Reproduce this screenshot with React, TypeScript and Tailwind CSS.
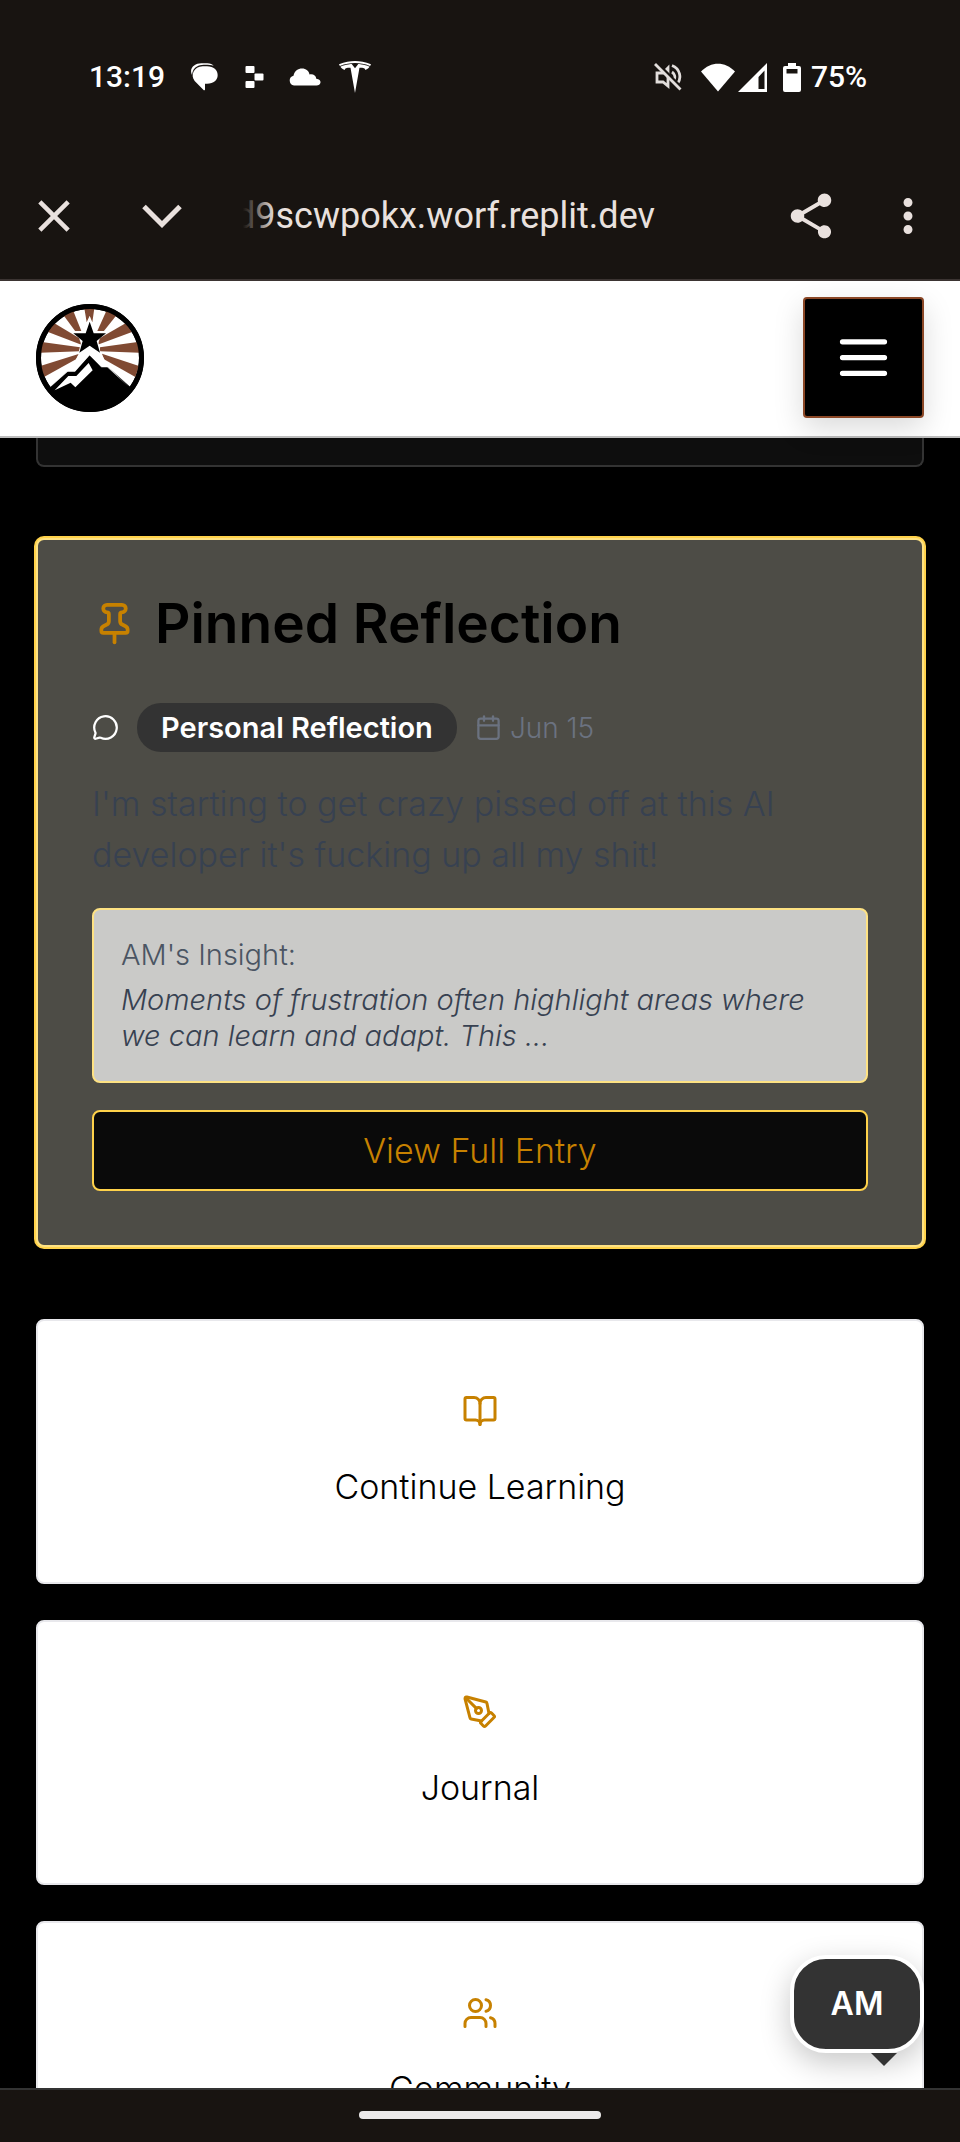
import type { ReactNode } from 'react';
import { BookOpen, Calendar, MessageCircle, PenTool, Pin, Users } from 'lucide-react';
import { MdClose, MdMoreVert, MdShare } from 'react-icons/md';
import { SiTesla } from 'react-icons/si';

function StatusBar() {
  return (
    <div className="flex h-[154px] items-center justify-between px-[89px] text-white">
      <div className="flex items-center">
        <span className="w-[101px] text-[30px] leading-9 font-medium">13:19</span>
        <svg className="mr-[27px] h-7 w-7" viewBox="0 0 84 84" fill="#fff">
          <path d="M6 36C-4 16 14 1 34 1h18c9 0 15 3 19 7C57 4 37 4 25 8 13 13 7 22 6 36z" />
          <path d="M38 10h13c20 0 32 11 32 26 0 16-12 26-32 26h-6v18c-2 2-3 2-5 0L14 54C0 36 12 11 38 10z" />
        </svg>
        <svg className="mr-6 h-[22px] w-5" viewBox="0 0 20 22" fill="#fff">
          <rect x="0.500" y="0" width="9" height="7" rx="1" />
          <rect x="9.500" y="7.500" width="9" height="7" rx="1" />
          <rect x="0.500" y="15" width="9" height="7" rx="1" />
        </svg>
        <svg className="mr-[18px] h-[18px] w-8" viewBox="0 0 32 18" fill="#fff">
          <path d="M5 17.500a5 5 0 0 1-.5-9.800C5.500 3 9 .5 13 .5c4 0 7 2.500 7.500 6 3.500-.8 6.500 1 6.800 4.200 3 .3 4.500 2 4.200 3.800-.3 2-1.800 3-4 3z" />
        </svg>
        <SiTesla className="h-8 w-8" />
      </div>
      <div className="flex items-center">
        <svg className="mr-[19px] h-7 w-7" viewBox="0 0 28 28" fill="none" stroke="#e2dedc" strokeWidth="2.800">
          <path d="M3 10h6l5-5v18l-5-4H3z" />
          <path d="M18 2.500a12 12 0 0 1 5 19M18 9a6 6 0 0 1 2 8" />
          <path d="M3 0 28 25" stroke="#181411" strokeWidth="3" />
          <path d="M1 1 26.500 26.500" />
        </svg>
        <svg className="mr-[3px] h-[29px] w-[34px]" viewBox="0 0 34 29" fill="#fff">
          <path d="M17 28.500 0 8.500C10-2 24-2 34 8.500z" />
        </svg>
        <svg className="mr-4 h-[29px] w-[29px]" viewBox="0 0 29 29" fill="#fff">
          <path fillRule="evenodd" d="M29 0v29H0zM26.500 7.500 20.500 14v12h6z" />
        </svg>
        <svg className="mr-[10px] h-[29px] w-[18px]" viewBox="0 0 18 29" fill="#fff">
          <path fillRule="evenodd" d="M5 0h8v3h3q2 0 2 2v22q0 2-2 2H2q-2 0-2-2V5q0-2 2-2h3zM3.500 6v4.500h11V6z" />
        </svg>
        <span className="w-[60px] text-[30px] leading-9 font-medium">75%</span>
      </div>
    </div>
  );
}

function BrowserBar() {
  return (
    <div className="flex h-[127px] items-center border-b-2 border-[#3b3432] pr-[25px] pb-[2px] pl-[27px] text-[#e9e1de]">
      <button type="button" aria-label="Close" className="mr-[61px]">
        <MdClose className="size-[54px]" />
      </button>
      <button type="button" aria-label="Minimize" className="mr-[61px]">
        <svg className="h-6 w-10" viewBox="0 0 40 24" fill="none" stroke="currentColor" strokeWidth="5">
          <path d="M2 2.500 20 20.500 38 2.500" />
        </svg>
      </button>
      <div className="relative flex h-12 flex-1 items-center overflow-hidden">
        <span className="-ml-2 text-[36px] leading-[48px]">d9scwpokx.worf.replit.dev</span>
        <span className="absolute inset-y-0 left-0 w-8 bg-linear-to-r from-[#181411] to-transparent" />
      </div>
      <button type="button" aria-label="Share" className="mr-[43px]">
        <MdShare className="size-[54px]" />
      </button>
      <button type="button" aria-label="More options">
        <MdMoreVert className="size-[54px]" />
      </button>
    </div>
  );
}

function Logo() {
  return (
    <svg className="size-[108px]" viewBox="48 71 324 324" role="img" aria-label="Mountain star logo">
      <defs>
        <clipPath id="disc">
          <circle cx="210" cy="233" r="154" />
        </clipPath>
      </defs>
      <circle cx="210" cy="233" r="162" fill="#000" />
      <circle cx="210" cy="233" r="147" fill="#fff" />
      <g clipPath="url(#disc)">
        <g fill="#804a33">
          <path d="M193 84h30l-6 42-8-20-9 20z" />
          <path d="M130 104l29-14 25 62-17 2z" />
          <path d="M290 104l-30-14-28 62 18 2z" />
          <path d="M84 155l18-27 75 45 7 20z" />
          <path d="M336 155l-18-27-78 45-7 20z" />
          <path d="M60 217v-33l120 17v12z" />
          <path d="M358 217v-33l-118 17v12z" />
          <path d="M72 290l-11-33 117-37-10 17z" />
          <path d="M346 290l11-33-111-37 6 17z" />
        </g>
        <path d="M62 348 142 272h22l44-48 38 36h18l94 84v60H62z" fill="#000" />
      </g>
      <circle cx="210" cy="233" r="154.500" fill="none" stroke="#000" strokeWidth="15" />
      <path d="M92 319 142 270h18l48-58 38 47h18l62 60-64-58h-18l-35-36-44 49h-22z" fill="#fff" />
      <path d="M206 248l12 22-52 51-14-14-48 23 41-43h24z" fill="#fff" />
      <path d="M176 220l34-24 34 24 20 38h-18l-38-36-44 48-12 0z" fill="#fff" />
      <path d="M209 112l14 40h41l-30 28 8 39-33-24-34 24 10-39-30-28h40z" fill="#fff" />
      <path d="M209 124l12 35h37l-28 23 10 35-31-21-31 21 10-35-28-23h37z" fill="#000" />
    </svg>
  );
}

function ActionCard({ icon, label }: { icon: ReactNode; label: string }) {
  return (
    <a
      href="#"
      className="flex flex-col items-center gap-8 rounded-lg border-2 border-[#e8e8ec] bg-white px-14 pt-[72px] pb-[70px] text-black"
    >
      <span className="text-[#c78100]">{icon}</span>
      <span className="text-[34px] leading-[51px] font-light">{label}</span>
    </a>
  );
}

export default function App() {
  return (
    <div className="flex h-screen flex-col bg-black font-['Inter',sans-serif]">
      <div className="shrink-0 bg-[#181411] font-['Roboto',sans-serif]">
        <StatusBar />
        <BrowserBar />
      </div>

      <header className="relative z-10 flex shrink-0 items-center justify-between border-b-2 border-[#bdbdbd] bg-white px-9 pt-4 pb-[18px]">
        <a href="#" className="block">
          <Logo />
        </a>
        <button
          type="button"
          aria-label="Open menu"
          className="flex size-[121px] items-center justify-center rounded border-2 border-[#8b4726] bg-black shadow-[0_10px_30px_rgba(0,0,0,0.15)]"
        >
          <svg className="size-[63px]" viewBox="0 0 24 24" fill="none" stroke="#fff" strokeWidth="2" strokeLinecap="round">
            <path d="M4 6h16M4 12h16M4 18h16" />
          </svg>
        </button>
      </header>

      <main className="min-h-0 flex-1 overflow-y-auto px-9 [scrollbar-width:none]">
        <div className="h-[29px] rounded-b-lg border-2 border-t-0 border-[#333] bg-[#0e0e0e]" />

        <section className="mt-[71px] rounded-lg border-2 border-[#fee283] bg-[#4d4c46] p-[54px] ring-2 ring-[#ffd24a]">
          <h2 className="flex items-center gap-[18px] text-[55px] leading-[58px] font-semibold text-black">
            <Pin className="size-[45px] text-[#c78100]" />
            Pinned Reflection
          </h2>

          <div className="mt-[51px] flex items-center text-[28px] leading-9">
            <MessageCircle className="mr-[18px] size-[27px] text-white" />
            <span className="mr-[18px] rounded-3xl bg-[#333] px-6 py-[7px] text-[29px] leading-[35px] font-semibold text-white">
              Personal Reflection
            </span>
            <Calendar className="mr-2 size-[27px] text-[#6b7280]" />
            <span className="font-light text-[#6b7280]">Jun 15</span>
          </div>

          <p className="mt-[26px] text-[34px] leading-[51px] font-light text-[#374151]">
            I'm starting to get crazy pissed off at this AI developer it's fucking up all my shit!
          </p>

          <div className="mt-[28px] rounded-lg border-2 border-[#fee283] bg-[#cacac8] px-[27px] py-[27px]">
            <p className="text-[29px] leading-9 font-light text-[#4b5563]">AM's Insight:</p>
            <p className="mt-[9px] text-[29px] leading-9 font-light text-[#374151] italic">
              Moments of frustration often highlight areas where we can learn and adapt. This ...
            </p>
          </div>

          <button
            type="button"
            className="mt-[27px] h-[81px] w-full rounded-lg border-2 border-[#ffd24a] bg-[#0a0a0a] text-[34px] font-light text-[#c78100]"
          >
            View Full Entry
          </button>
        </section>

        <nav className="mt-[72px] flex flex-col gap-9">
          <ActionCard icon={<BookOpen className="size-9" />} label="Continue Learning" />
          <ActionCard icon={<PenTool className="size-9" />} label="Journal" />
          <ActionCard icon={<Users className="size-9" />} label="Community" />
        </nav>
      </main>

      <footer className="relative flex h-[54px] shrink-0 items-center justify-center border-t-2 border-[#333] bg-[#181411] pb-[2px]">
        <span className="h-2 w-[242px] rounded bg-[#eceaea]" />
        <div className="absolute right-9 bottom-[89px]">
          <button
            type="button"
            className="block h-[98px] w-[134px] rounded-[36px] border-4 border-white bg-[#333] text-[32px] font-semibold text-white shadow-[0_10px_30px_rgba(0,0,0,0.22)]"
          >
            AM
          </button>
          <svg className="absolute top-full right-[27px] h-[13px] w-[26px]" viewBox="0 0 26 13" fill="#333">
            <path d="M0 0h26L13 13z" />
          </svg>
        </div>
      </footer>
    </div>
  );
}
